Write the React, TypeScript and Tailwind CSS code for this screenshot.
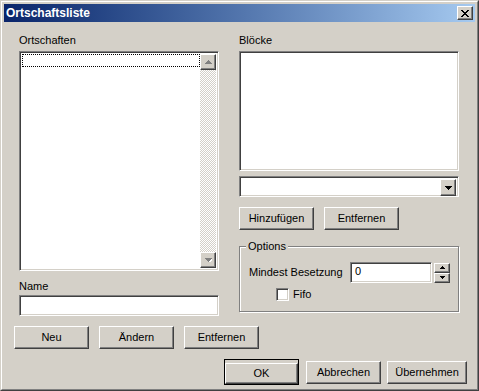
import React from 'react'

const font = "font-['Tahoma','Liberation_Sans',sans-serif]"

// classic raised / sunken 3D edges
const raised =
  'border border-t-white border-l-white border-r-[#404040] border-b-[#404040] shadow-[inset_-1px_-1px_#808080] bg-[#d4d0c8]'
const sunken =
  'border border-t-[#808080] border-l-[#808080] border-r-white border-b-white shadow-[inset_1px_1px_#404040,inset_-1px_-1px_#d4d0c8] bg-white'

const Btn = ({ label, w = 'w-[75px]' }: { label: string; w?: string }) => (
  <button
    className={`${raised} ${w} h-[23px] shrink-0 text-[11px] leading-[13px] text-black`}
  >
    {label}
  </button>
)

const Arrow = ({ dir, color = '#000', size = 'big' }: { dir: 'up' | 'down'; color?: string; size?: 'big' | 'small' }) => {
  const w = size === 'big' ? 7 : 5
  const h = size === 'big' ? 4 : 3
  const pts = dir === 'up' ? `0,${h} ${w / 2},0 ${w},${h}` : `0,0 ${w},0 ${w / 2},${h}`
  return (
    <svg width={w} height={h} viewBox={`0 0 ${w} ${h}`} className="block" shapeRendering="crispEdges">
      {color === '#808080' && (
        <polygon points={pts} fill="#fff" transform="translate(1,1)" />
      )}
      <polygon points={pts} fill={color} />
    </svg>
  )
}

const Label = ({ text, className = '' }: { text: string; className?: string }) => (
  <div className={`h-[13px] text-[11px] leading-[13px] text-black ${className}`}>{text}</div>
)

export default function App() {
  return (
    <div className={`${font} w-[479px] h-[391px] border border-t-[#d4d0c8] border-l-[#d4d0c8] border-r-[#404040] border-b-[#404040] bg-[#d4d0c8]`}>
      <div className="h-full w-full border border-t-white border-l-white border-r-[#808080] border-b-[#808080] p-[2px] flex flex-col">
        {/* title bar */}
        <div className="h-[18px] shrink-0 flex items-center justify-between bg-gradient-to-r from-[#0a246a] to-[#a6caf0] pl-[2px] pr-[2px]">
          <span className="text-[12px] font-bold text-white leading-[13px]">Ortschaftsliste</span>
          <div className={`${raised} w-[16px] h-[14px] flex items-center justify-center`}>
            <svg width="8" height="7" viewBox="0 0 8 7" shapeRendering="crispEdges">
              <path d="M0 0h2v1h-2zM6 0h2v1h-2zM1 1h2v1h-2zM5 1h2v1h-2zM2 2h4v1h-4zM3 3h2v1h-2zM2 4h4v1h-4zM1 5h2v1h-2zM5 5h2v1h-2zM0 6h2v1h-2zM6 6h2v1h-2z" fill="#000" />
            </svg>
          </div>
        </div>

        {/* body */}
        <div className="flex-1 flex flex-col">
          <div className="flex pl-[15px] pt-[12px] gap-[20px]">
            {/* left column */}
            <div className="w-[200px] flex flex-col">
              <Label text="Ortschaften" />
              <div className={`${sunken} mt-[4px] h-[220px] p-[2px] flex`}>
                <div className="flex-1 flex flex-col">
                  <div className="h-[13px] border border-dotted border-black" />
                </div>
                <div className="w-[16px] flex flex-col bg-[repeating-conic-gradient(#d4d0c8_0_25%,#fff_0_50%)] bg-[length:2px_2px]">
                  <div className={`${raised} h-[16px] flex items-center justify-center`}>
                    <Arrow dir="up" color="#808080" />
                  </div>
                  <div className="flex-1" />
                  <div className={`${raised} h-[16px] flex items-center justify-center`}>
                    <Arrow dir="down" color="#808080" />
                  </div>
                </div>
              </div>
              <Label text="Name" className="mt-[9px]" />
              <div className={`${sunken} mt-[2px] h-[21px]`} />
            </div>

            {/* right column */}
            <div className="w-[221px] flex flex-col">
              <Label text="Blöcke" />
              <div className={`${sunken} mt-[4px] h-[120px] w-[220px]`} />
              <div className={`${sunken} mt-[5px] h-[21px] w-[220px] p-[2px] flex justify-end`}>
                <div className={`${raised} w-[16px] h-[17px] flex items-center justify-center`}>
                  <Arrow dir="down" />
                </div>
              </div>
              <div className="mt-[10px] flex gap-[10px]">
                <Btn label="Hinzufügen" />
                <Btn label="Entfernen" />
              </div>
              <div className="relative mt-[16px] h-[66px] border border-[#808080] shadow-[1px_1px_0_#fff,inset_1px_1px_0_#fff] w-[220px]">
                <span className="absolute left-[6px] top-[-7px] bg-[#d4d0c8] px-[2px] text-[11px] leading-[13px] text-black">
                  Options
                </span>
                <div className="flex items-center pl-[9px] pt-[15px]">
                  <span className="w-[101px] text-[11px] leading-[13px] text-black">Mindest Besetzung</span>
                  <div className={`${sunken} w-[82px] h-[21px] pl-[4px] text-[11px] leading-[17px] text-black`}>0</div>
                  <div className="ml-[2px] flex flex-col">
                    <div className={`${raised} w-[16px] h-[10px] flex items-center justify-center`}>
                      <Arrow dir="up" size="small" />
                    </div>
                    <div className={`${raised} w-[16px] h-[10px] flex items-center justify-center`}>
                      <Arrow dir="down" size="small" />
                    </div>
                  </div>
                </div>
                <div className="flex items-center pl-[36px] mt-[5px]">
                  <div className={`${sunken} w-[13px] h-[13px]`} />
                  <span className="ml-[4px] text-[11px] leading-[13px] text-black">Fifo</span>
                </div>
              </div>
            </div>
          </div>

          <div className="mt-[10px] flex pl-[10px] gap-[10px]">
            <Btn label="Neu" />
            <Btn label="Ändern" />
            <Btn label="Entfernen" />
          </div>

          <div className="mt-[10px] flex justify-end pr-[8px]">
            <div className="border border-black">
              <button className={`${raised} w-[73px] h-[21px] text-[11px] leading-[13px] text-black`}>OK</button>
            </div>
            <div className="ml-[7px]">
              <Btn label="Abbrechen" />
            </div>
            <div className="ml-[6px]">
              <Btn label="Übernehmen" w="w-[80px]" />
            </div>
          </div>
        </div>
      </div>
    </div>
  )
}
